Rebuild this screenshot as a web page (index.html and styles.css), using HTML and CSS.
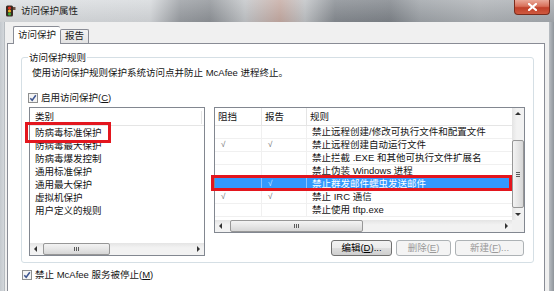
FILE: index.html
```html
<!DOCTYPE html>
<html lang="zh-CN">
<head>
  <meta charset="UTF-8" />
  <meta name="viewport" content="width=device-width, initial-scale=1" />
  <title>访问保护属性</title>
  <link rel="stylesheet" href="styles.css">
</head>
<body>
  <div class="window">
    <div class="titlebar">
      <svg class="app-icon" width="12" height="12" viewBox="0 0 12 12">
        <rect x="2" y="0.5" width="7" height="11" rx="1.5" fill="#3a2a22"/>
        <circle cx="5.5" cy="3" r="1.6" fill="#e0301e"/>
        <circle cx="5.5" cy="6" r="1.6" fill="#f0b020"/>
        <circle cx="5.5" cy="9" r="1.6" fill="#3fae3a"/>
        <rect x="9" y="2" width="2.5" height="3" fill="#6b5446"/>
      </svg>
      <span class="title">访问保护属性</span>
      <div class="close-btn">
        <svg width="9" height="8" viewBox="0 0 9 8">
          <path d="M1 1 L8 7 M8 1 L1 7" stroke="#fff" stroke-width="2.2" stroke-linecap="square"/>
        </svg>
      </div>
    </div>

    <div class="client">
      <div class="tabs">
        <div class="tab active">访问保护</div>
        <div class="tab">报告</div>
      </div>

      <div class="panel">
        <fieldset class="group">
          <legend>访问保护规则</legend>
          <p class="desc">使用访问保护规则保护系统访问点并防止 McAfee 进程终止。</p>

          <label class="check">
            <svg class="box" width="10" height="10" viewBox="0 0 10 10">
              <rect x="0.5" y="0.5" width="9" height="9" fill="#f4f4f4" stroke="#8e8f8f"/>
              <path d="M2.3 5.2 L4.2 7.3 L7.8 2.3" fill="none" stroke="#3d5590" stroke-width="1.5"/>
            </svg>
            启用访问保护(<u>C</u>)
          </label>

          <div class="lists">
            <!-- 类别 -->
            <div class="listbox">
              <div class="list-head"><span>类别</span></div>
              <ul class="list-items">
                <li><span class="marked">防病毒标准保护</span></li>
                <li>防病毒最大保护</li>
                <li>防病毒爆发控制</li>
                <li>通用标准保护</li>
                <li>通用最大保护</li>
                <li>虚拟机保护</li>
                <li>用户定义的规则</li>
              </ul>
              <div class="hscroll">
                <span class="arrow left"></span>
                <span class="thumb cat-thumb"><i class="grip"></i></span>
                <span class="track"></span>
                <span class="arrow right"></span>
              </div>
            </div>

            <!-- 规则 -->
            <div class="rules-col">
              <div class="listview">
                <div class="lv-main">
                  <div class="lv-table">
                    <div class="lv-row lv-head"><span>阻挡</span><span>报告</span><span>规则</span></div>
                    <div class="lv-row"><span></span><span></span><span>禁止远程创建/修改可执行文件和配置文件</span></div>
                    <div class="lv-row"><span class="tick">√</span><span class="tick">√</span><span>禁止远程创建自动运行文件</span></div>
                    <div class="lv-row"><span></span><span></span><span>禁止拦截 .EXE 和其他可执行文件扩展名</span></div>
                    <div class="lv-row"><span></span><span></span><span>禁止伪装 Windows 进程</span></div>
                    <div class="lv-row selected"><span></span><span class="tick">√</span><span>禁止群发邮件蠕虫发送邮件</span></div>
                    <div class="lv-row"><span class="tick">√</span><span class="tick">√</span><span>禁止 IRC 通信</span></div>
                    <div class="lv-row"><span></span><span></span><span>禁止使用 tftp.exe</span></div>
                  </div>
                  <div class="vscroll">
                    <span class="arrow up"></span>
                    <span class="thumb v-thumb"><i class="grip"></i></span>
                    <span class="arrow down"></span>
                  </div>
                </div>
                <div class="lv-bottom">
                  <div class="hscroll">
                    <span class="arrow left"></span>
                    <span class="thumb rule-thumb"><i class="grip"></i></span>
                    <span class="track"></span>
                    <span class="arrow right"></span>
                  </div>
                  <div class="corner"></div>
                </div>
              </div>

              <div class="buttons">
                <button class="btn btn-edit">编辑(<u>D</u>)...</button>
                <button class="btn btn-del" disabled>删除(<u>E</u>)</button>
                <button class="btn btn-new" disabled>新建(<u>F</u>)...</button>
              </div>
            </div>
          </div>
        </fieldset>

        <label class="check bottom-check">
          <svg class="box" width="10" height="10" viewBox="0 0 10 10">
            <rect x="0.5" y="0.5" width="9" height="9" fill="#f4f4f4" stroke="#8e8f8f"/>
            <path d="M2.3 5.2 L4.2 7.3 L7.8 2.3" fill="none" stroke="#3d5590" stroke-width="1.5"/>
          </svg>
          禁止 McAfee 服务被停止(<u>M</u>)
        </label>
      </div>
    </div>
  </div>
</body>
</html>
```

FILE: styles.css
```css
/* Reset */
*, *::before, *::after {
  box-sizing: border-box;
}

body {
  margin: 0;
  width: 554px;
  height: 291px;
  overflow: hidden;
  font-family: "Liberation Sans", "Noto Sans CJK SC", sans-serif;
  font-size: 9.5px;
  color: #141414;
  background: #c9ced3;
}

u {
  text-decoration: underline;
}

/* Janela */
.window {
  width: 554px;
  height: 291px;
  display: flex;
  flex-direction: column;
  background: linear-gradient(to right, #c4c9ce 0, #d3d7db 4px, #9aa0a6 5px, #b9bec3 549px, #8f959b 554px);
}

.titlebar {
  height: 22px;
  flex: none;
  display: flex;
  align-items: center;
  background-color: #b5b9bd;
  background-image:
    linear-gradient(rgba(255, 255, 255, 0.18), rgba(0, 0, 0, 0.06)),
    linear-gradient(to right,
      #dcdfe2 0px, #d6d9dc 150px, #9a9ea3 180px, #8f9398 210px, #c2c5c8 245px,
      #c5aaa2 280px, #bfc2c5 305px, #868b91 335px, #7f848a 390px,
      #9ea3a8 420px, #aeb2b6 480px, #a6abb0 554px);
}

.app-icon {
  margin-left: 4px;
  flex: none;
}

.title {
  margin-left: 5px;
  color: #222;
  line-height: 12px;
}

.close-btn {
  margin-left: auto;
  margin-right: 4px;
  align-self: flex-start;
  width: 36px;
  height: 15px;
  display: flex;
  align-items: center;
  justify-content: center;
  border: 1px solid #7a2c1c;
  border-top: none;
  border-radius: 0 0 4px 4px;
  background: linear-gradient(#e9a898 0, #d8705a 45%, #c0402a 55%, #cf5a40 100%);
}

/* Área cliente */
.client {
  flex: 1;
  margin: 0 5px 0 5px;
  background: #f0f0f0;
  display: flex;
  flex-direction: column;
}

.tabs {
  height: 21px;
  flex: none;
  display: flex;
  align-items: flex-end;
  padding-left: 8px;
}

.tab {
  height: 14px;
  padding: 0 4px;
  line-height: 12px;
  border: 1px solid #898c95;
  border-bottom: none;
  border-radius: 2px 2px 0 0;
  background: linear-gradient(#f4f4f4, #e2e2e2);
  color: #1a1a1a;
}

.tab.active {
  position: relative;
  z-index: 1;
  height: 18px;
  margin-bottom: -1px;
  padding-top: 2px;
  background: #fff;
  border-right: none;
}

.panel {
  flex: 1;
  margin: 0 4px 0 2px;
  padding: 8px 10px 0 13px;
  border: 1px solid #898c95;
  border-bottom: none;
  background: #fff;
}

/* Grupo */
.group {
  margin: 0;
  padding: 0 8px 6px 6px;
  border: 1px solid #d5dfe5;
  border-radius: 3px;
}

.group legend {
  padding: 0 1px;
  line-height: 11px;
}

.desc {
  margin: 3px 0 0 0;
  padding-left: 4px;
  line-height: 13px;
}

.check {
  display: flex;
  align-items: center;
  margin-top: 12px;
  height: 13px;
  line-height: 13px;
}

.check .box {
  margin-right: 3px;
  flex: none;
}

.bottom-check {
  margin-top: 5px;
  margin-left: 1px;
}

.lists {
  display: flex;
  align-items: flex-start;
  gap: 9px;
  margin-top: 3px;
  padding-left: 1px;
}

/* Lista de categorias */
.listbox {
  width: 176px;
  height: 149px;
  border: 1px solid #828790;
  display: flex;
  flex-direction: column;
}

.list-head {
  height: 18px;
  flex: none;
  padding: 3px 0 0 5px;
  line-height: 11px;
  border-bottom: 1px solid #e5e5e5;
}

.list-head span {
  display: block;
  width: 167px;
  border-right: 1px solid #e5e5e5;
  height: 13px;
}

.list-items {
  flex: 1;
  list-style: none;
  margin: 0;
  padding: 0 0 0 5px;
}

.list-items li {
  height: 13px;
  line-height: 13px;
}

.marked {
  position: relative;
  display: inline-block;
  line-height: 13px;
}

.marked::after {
  content: "";
  position: absolute;
  inset: -4px -9px -4px -10px;
  border: 3px solid #e3161e;
}

/* Barras de rolagem */
.hscroll {
  height: 12px;
  flex: none;
  display: flex;
  align-items: stretch;
  background: linear-gradient(#e4e4e4, #f2f2f2 40%, #f2f2f2);
}

.track {
  flex: 1;
}

.arrow {
  width: 12px;
  flex: none;
  position: relative;
}

.arrow::before {
  content: "";
  position: absolute;
  left: 4px;
  top: 3px;
  border: 3px solid transparent;
}

.arrow.left::before {
  border-right: 3px solid #333;
  border-left: none;
  left: 4px;
}

.arrow.right::before {
  border-left: 3px solid #333;
  border-right: none;
  left: 5px;
}

.arrow.up,
.arrow.down {
  height: 12px;
}

.arrow.up::before {
  border-bottom: 3px solid #333;
  border-top: none;
  left: 3px;
  top: 4px;
}

.arrow.down::before {
  border-top: 3px solid #333;
  border-bottom: none;
  left: 3px;
  top: 5px;
}

.thumb {
  flex: none;
  display: flex;
  align-items: center;
  justify-content: center;
  border: 1px solid #979797;
  border-radius: 2px;
  background: linear-gradient(#f3f3f3, #e6e6e6 50%, #d6d6d6);
}

.grip {
  display: block;
  width: 5px;
  height: 4px;
  background: repeating-linear-gradient(to right, #5a5a5a 0 1px, transparent 1px 2px);
}

.cat-thumb {
  width: 67px;
  margin-left: 1px;
}

.rule-thumb {
  width: 133px;
  margin-left: 3px;
}

.vscroll {
  width: 12px;
  flex: none;
  display: flex;
  flex-direction: column;
  background: linear-gradient(to right, #e4e4e4, #f2f2f2 40%, #f2f2f2);
}

.v-thumb {
  height: 68px;
  margin-top: 20px;
  margin-bottom: auto;
  background: linear-gradient(to right, #f3f3f3, #e6e6e6 50%, #d6d6d6);
}

.v-thumb .grip {
  width: 4px;
  height: 5px;
  background: repeating-linear-gradient(#5a5a5a 0 1px, transparent 1px 2px);
}

/* Lista de regras */
.rules-col {
  width: 311px;
  display: flex;
  flex-direction: column;
}

.listview {
  height: 126px;
  border: 1px solid #828790;
  display: flex;
  flex-direction: column;
}

.lv-main {
  height: 112px;
  display: flex;
}

.lv-table {
  flex: 1;
}

.lv-row {
  display: grid;
  grid-template-columns: 47px 45px 1fr;
  height: 13px;
  line-height: 12px;
  border-bottom: 1px solid #f0f0f0;
  white-space: nowrap;
  position: relative;
}

.lv-row span {
  padding-left: 5px;
  border-right: 1px solid #f0f0f0;
}

.lv-row span:last-child {
  border-right: none;
}

.lv-head {
  height: 18px;
  line-height: 17px;
  border-bottom: 1px solid #e5e5e5;
}

.lv-head span {
  padding-left: 3px;
  border-right-color: #e5e5e5;
}

.tick {
  color: #666;
  font-size: 8px;
  padding-left: 6px !important;
}

.lv-row.selected {
  background: #3399ff;
  color: #fff;
}

.lv-row.selected span {
  border-right-color: #8cc4ff;
}

.lv-row.selected .tick {
  color: #d8ebff;
}

.lv-row.selected::after {
  content: "";
  position: absolute;
  inset: -3px 0 -1px -4px;
  border: 3px solid #e3161e;
}

.lv-bottom {
  display: flex;
  height: 12px;
}

.lv-bottom .hscroll {
  flex: 1;
}

.corner {
  width: 12px;
  background: #f0f0f0;
}

/* Botões */
.buttons {
  display: flex;
  justify-content: flex-end;
  gap: 4px;
  margin-top: 7px;
  padding-right: 1px;
}

.btn {
  height: 16px;
  padding: 0;
  font-family: inherit;
  font-size: 9.5px;
  line-height: 14px;
  border-radius: 3px;
  border: 1px solid #707070;
  background: linear-gradient(#f2f2f2 0, #ebebeb 50%, #dddddd 51%, #cfcfcf 100%);
  color: #000;
}

.btn:disabled {
  border-color: #adb2b5;
  background: #f4f4f4;
  color: #9a9a9a;
}

.btn-edit {
  width: 61px;
}

.btn-del {
  width: 55px;
}

.btn-new {
  width: 69px;
}
```
